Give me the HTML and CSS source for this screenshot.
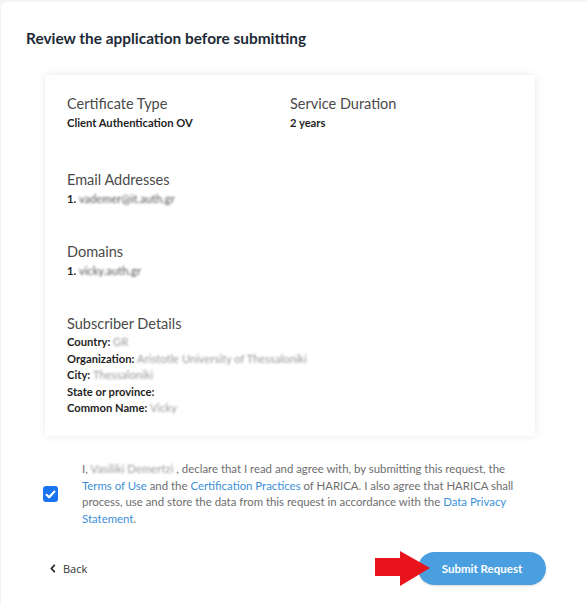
FILE: index.html
```html
<!DOCTYPE html>
<html lang="en">
<head>
<meta charset="utf-8">
<title>Review the application</title>
<link rel="stylesheet" href="styles.css">
</head>
<body>
<div class="page">
  <div class="panel">
    <h1 class="title">Review the application before submitting</h1>

    <div class="review-card">
      <div class="row-two">
        <div class="field">
          <div class="label">Certificate Type</div>
          <div class="value">Client Authentication OV</div>
        </div>
        <div class="field">
          <div class="label">Service Duration</div>
          <div class="value">2 years</div>
        </div>
      </div>

      <div class="field section">
        <div class="label">Email Addresses</div>
        <div class="value">1. <span class="blur">vademer@it.auth.gr</span></div>
      </div>

      <div class="field section">
        <div class="label">Domains</div>
        <div class="value">1. <span class="blur">vicky.auth.gr</span></div>
      </div>

      <div class="field section">
        <div class="label">Subscriber Details</div>
        <div class="details">
          <div>Country: <span class="blur light">GR</span></div>
          <div>Organization: <span class="blur light">Aristotle University of Thessaloniki</span></div>
          <div>City: <span class="blur light">Thessaloniki</span></div>
          <div>State or province:</div>
          <div>Common Name: <span class="blur light">Vicky</span></div>
        </div>
      </div>
    </div>

    <div class="consent">
      <span class="check">
        <svg width="15" height="15" viewBox="0 0 15 15"><path d="M3.6 7.8 L6.2 10.3 L11.4 4.6" fill="none" stroke="#fff" stroke-width="2.2" stroke-linecap="round" stroke-linejoin="round"/></svg>
      </span>
      <p class="consent-text">I, <span class="blur light">Vasiliki Demertzi</span> , declare that I read and agree with, by submitting this request, the <a class="link">Terms of Use</a> and the <a class="link">Certification Practices</a> of HARICA. I also agree that HARICA shall process, use and store the data from this request in accordance with the <a class="link">Data Privacy Statement</a>.</p>
    </div>

    <div class="footer">
      <a class="back">
        <svg width="6" height="9" viewBox="0 0 6 9"><path d="M4.8 0.9 L1.4 4.5 L4.8 8.1" fill="none" stroke="#222" stroke-width="1.6"/></svg>
        <span>Back</span>
      </a>
      <div class="submit-wrap">
        <svg class="arrow" width="56" height="36" viewBox="0 0 56 36"><polygon points="0,7 25,7 25,0 55,17 25,35 25,25 0,25" fill="#e8131b"/></svg>
        <button class="submit">Submit Request</button>
      </div>
    </div>
  </div>
</div>
</body>
</html>
```

FILE: styles.css
```css
html, body {
  margin: 0;
  padding: 0;
  overflow: hidden;
}
body {
  background: #f3f5f8;
  font-family: Lato, "Open Sans", sans-serif;
}
.page {
  padding: 2px 0 0 1px;
  height: 605px;
  box-sizing: border-box;
}
.panel {
  background: #fff;
  border-radius: 5px 0 0 0;
  padding: 26px 0 0 25px;
  height: 100%;
  box-sizing: border-box;
}
.title {
  margin: 0;
  font-size: 15.4px;
  line-height: 20px;
  font-weight: 700;
  color: #1d2a35;
}
.review-card {
  margin: 27px 0 0 19px;
  width: 490px;
  box-sizing: border-box;
  padding: 19px 22px 19px 22px;
  background: #fff;
  box-shadow: 0 0 8px rgba(0, 0, 0, 0.09);
}
.row-two {
  display: grid;
  grid-template-columns: 223px 1fr;
  margin-bottom: 39px;
}
.section + .section {
  margin-top: 35px;
}
.label {
  font-size: 14.5px;
  line-height: 20px;
  color: #4a4a4a;
}
.value {
  font-size: 11.2px;
  line-height: 17px;
  font-weight: 700;
  color: #1f1f1f;
}
.details {
  font-size: 11.2px;
  line-height: 16.6px;
  font-weight: 700;
  color: #1f1f1f;
}
.blur {
  filter: blur(1.3px);
  font-weight: 400;
  color: #555;
}
.blur.light {
  color: #999;
}
.consent {
  display: flex;
  align-items: center;
  margin-top: 25px;
  padding-left: 17px;
}
.check {
  width: 15px;
  height: 16px;
  border-radius: 3px;
  background: #1a73f0;
  display: flex;
  align-items: center;
  justify-content: center;
  flex-shrink: 0;
}
.consent-text {
  margin: 0 0 0 24px;
  width: 436px;
  font-size: 11.4px;
  line-height: 16.6px;
  color: #6e6e6e;
}
.link {
  color: #3d8fd8;
}
.footer {
  display: flex;
  justify-content: space-between;
  align-items: center;
  margin-top: 25px;
  padding-left: 24px;
  width: 496px;
}
.back {
  display: flex;
  align-items: center;
  gap: 7px;
  font-family: "Open Sans", sans-serif;
  font-size: 11px;
  color: #333;
}
.submit-wrap {
  position: relative;
}
.submit {
  width: 128px;
  height: 33px;
  border: none;
  border-radius: 17px;
  background: #4a9fe0;
  color: #fff;
  font-family: Lato, sans-serif;
  font-weight: 700;
  font-size: 11.5px;
  box-shadow: 0 1px 2px rgba(0, 0, 0, 0.15);
}
.arrow {
  position: absolute;
  left: -43px;
  top: -1px;
  z-index: 1;
}
```
